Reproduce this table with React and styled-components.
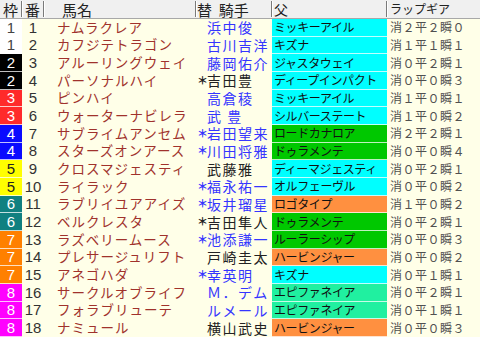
import React from "react";
import styled, { createGlobalStyle } from "styled-components";

const Global = createGlobalStyle`
  html, body { margin: 0; padding: 0; background: #ffffe8; }
  body { font-family: "Noto Sans CJK JP", "Liberation Sans", sans-serif; }
`;

const COLS = "22px 22px 152px 76px 115px 1fr";

const Table = styled.div`
  width: 480px;
  height: 337px;
  display: grid;
  grid-template-rows: 19px repeat(18, 1fr);
  background: #ffffe8;
  overflow: hidden;
`;

const HeaderRow = styled.div`
  display: grid;
  grid-template-columns: ${COLS};
  background: #f0f0f0;
  border-bottom: 1px solid #a8a8a8;
  box-sizing: border-box;
`;

const HeadCell = styled.div`
  display: flex;
  align-items: center;
  justify-content: ${(p) => (p.$center ? "center" : "flex-start")};
  padding-left: ${(p) => p.$pad || 0}px;
  font-size: ${(p) => p.$size || 15}px;
  color: #222;
  line-height: 1;
  white-space: pre;
  border-right: ${(p) => (p.$last ? "none" : "1px solid #7a7a7a")};
  box-shadow: ${(p) => (p.$last ? "none" : "1px 0 0 #ffffff")};
  margin: 1px 0;
`;

const Row = styled.div`
  display: grid;
  grid-template-columns: ${COLS};
  min-height: 0;
`;

const Cell = styled.div`
  display: flex;
  align-items: center;
  min-width: 0;
  overflow: hidden;
  white-space: nowrap;
  line-height: 1;
  background: ${(p) => p.$bg || "transparent"};
  border-bottom: 1px solid ${(p) => (p.$bg ? "rgba(255,255,255,0.75)" : "transparent")};
  box-sizing: border-box;
`;

const WakuCell = styled(Cell)`
  justify-content: center;
  font-family: "Liberation Sans", sans-serif;
  font-size: 15px;
  color: ${(p) => p.$fg};
`;

const NumCell = styled(Cell)`
  justify-content: center;
  font-family: "Liberation Sans", sans-serif;
  font-size: 15px;
  color: #333;
`;

const NameCell = styled(Cell)`
  padding-left: 13px;
  font-size: 13.5px;
  letter-spacing: 1px;
  color: #a0322c;
`;

const JockeyCell = styled(Cell)`
  padding-left: 1px;
  font-size: 14px;
  letter-spacing: 1.5px;
  color: ${(p) => (p.$blue ? "#3535ff" : "#222")};
`;

const Mark = styled.span`
  display: inline-block;
  width: 10px;
  font-size: 11px;
  font-weight: bold;
  letter-spacing: 0;
  text-align: center;
`;

const SireCell = styled(Cell)`
  padding-left: 2px;
  font-size: 12px;
  letter-spacing: -0.4px;
  color: #111;
`;

const RapCell = styled(Cell)`
  padding-left: 3px;
  font-size: 12px;
  letter-spacing: 0.5px;
  color: #505050;
`;

const WAKU = {
  1: ["#ffffff", "#444"],
  2: ["#000000", "#fff"],
  3: ["#ff2a2a", "#fff"],
  4: ["#0a0aff", "#fff"],
  5: ["#ffff00", "#222"],
  6: ["#108080", "#fff"],
  7: ["#ff8000", "#fff"],
  8: ["#ff00ff", "#fff"],
};

const SIRE = {
  c: "#00ffff",
  g: "#00c800",
  o: "#ff9040",
  m: "#20f0a0",
};

const DATA = [
  [1, 1, "ナムラクレア", false, "浜中俊", true, "ミッキーアイル", "c", "消２平２瞬０"],
  [1, 2, "カフジテトラゴン", false, "古川吉洋", true, "キズナ", "c", "消１平１瞬１"],
  [2, 3, "アルーリングウェイ", false, "藤岡佑介", true, "ジャスタウェイ", "c", "消０平２瞬１"],
  [2, 4, "パーソナルハイ", true, "吉田豊", false, "ディープインパクト", "c", "消０平０瞬３"],
  [3, 5, "ピンハイ", false, "高倉稜", true, "ミッキーアイル", "c", "消１平０瞬１"],
  [3, 6, "ウォーターナビレラ", false, "武 豊", true, "シルバーステート", "c", "消１平０瞬２"],
  [4, 7, "サブライムアンセム", true, "岩田望来", true, "ロードカナロア", "g", "消２平２瞬１"],
  [4, 8, "スターズオンアース", true, "川田将雅", true, "ドゥラメンテ", "g", "消０平０瞬４"],
  [5, 9, "クロスマジェスティ", false, "武藤雅", false, "ディーマジェスティ", "c", "消０平２瞬１"],
  [5, 10, "ライラック", true, "福永祐一", true, "オルフェーヴル", "c", "消０平０瞬２"],
  [6, 11, "ラブリイユアアイズ", true, "坂井瑠星", true, "ロゴタイプ", "o", "消１平０瞬２"],
  [6, 12, "ベルクレスタ", true, "吉田隼人", false, "ドゥラメンテ", "g", "消０平２瞬１"],
  [7, 13, "ラズベリームース", true, "池添謙一", true, "ルーラーシップ", "g", "消０平０瞬３"],
  [7, 14, "プレサージュリフト", false, "戸崎圭太", false, "ハービンジャー", "o", "消０平０瞬２"],
  [7, 15, "アネゴハダ", true, "幸英明", true, "キズナ", "c", "消０平１瞬１"],
  [8, 16, "サークルオブライフ", false, "Ｍ．デム", true, "エピファネイア", "m", "消０平２瞬１"],
  [8, 17, "フォラブリューテ", false, "ルメール", true, "エピファネイア", "m", "消０平１瞬１"],
  [8, 18, "ナミュール", false, "横山武史", false, "ハービンジャー", "o", "消０平０瞬３"],
];

export default function App() {
  return (
    <>
      <Global />
      <Table>
        <HeaderRow>
          <HeadCell $center>枠</HeadCell>
          <HeadCell $center>番</HeadCell>
          <HeadCell $pad={18}>馬名</HeadCell>
          <HeadCell $pad={1}>{"替  騎手"}</HeadCell>
          <HeadCell $pad={2} $size={14}>父</HeadCell>
          <HeadCell $pad={3} $size={12} $last>ラップギア</HeadCell>
        </HeaderRow>
        {DATA.map(([waku, num, name, change, jockey, blue, sire, sc, rap]) => (
          <Row key={num}>
            <WakuCell $bg={WAKU[waku][0]} $fg={WAKU[waku][1]}>{waku}</WakuCell>
            <NumCell>{num}</NumCell>
            <NameCell>{name}</NameCell>
            <JockeyCell $blue={blue}>
              <Mark>{change ? "＊" : ""}</Mark>
              {jockey}
            </JockeyCell>
            <SireCell $bg={SIRE[sc]}>{sire}</SireCell>
            <RapCell>{rap}</RapCell>
          </Row>
        ))}
      </Table>
    </>
  );
}
